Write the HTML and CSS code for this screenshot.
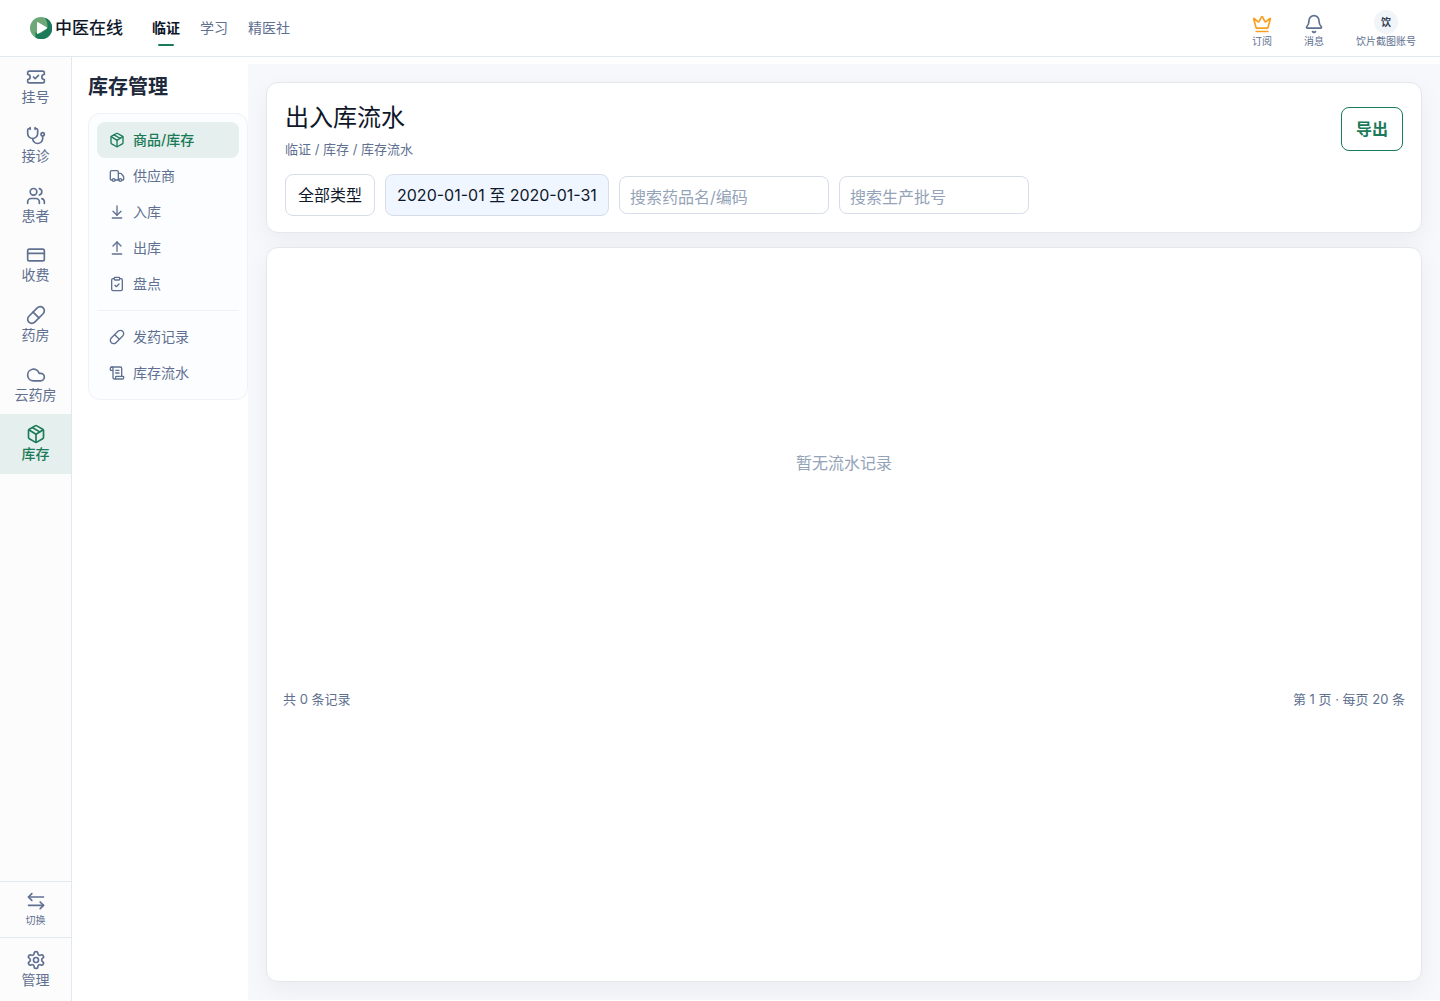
FILE: index.html
```html
<!DOCTYPE html>
<html lang="zh-CN">
<head>
<meta charset="utf-8">
<meta name="viewport" content="width=device-width, initial-scale=1">
<title>出入库流水 - 中医在线</title>
<link rel="stylesheet" href="styles.css">
</head>
<body>
<svg class="sprite" aria-hidden="true">
  <symbol id="i-ticket" viewBox="0 0 24 24"><path d="M2 9a3 3 0 1 1 0 6v2a2 2 0 0 0 2 2h16a2 2 0 0 0 2-2v-2a3 3 0 1 1 0-6V7a2 2 0 0 0-2-2H4a2 2 0 0 0-2 2Z"/><path d="m9 12 2 2 4-4"/></symbol>
  <symbol id="i-steth" viewBox="0 0 24 24"><path d="M11 2v2"/><path d="M5 2v2"/><path d="M5 3H4a2 2 0 0 0-2 2v4a6 6 0 0 0 12 0V5a2 2 0 0 0-2-2h-1"/><path d="M8 15a6 6 0 0 0 12 0v-3"/><circle cx="20" cy="10" r="2"/></symbol>
  <symbol id="i-users" viewBox="0 0 24 24"><path d="M16 21v-2a4 4 0 0 0-4-4H6a4 4 0 0 0-4 4v2"/><circle cx="9" cy="7" r="4"/><path d="M22 21v-2a4 4 0 0 0-3-3.87"/><path d="M16 3.13a4 4 0 0 1 0 7.75"/></symbol>
  <symbol id="i-card" viewBox="0 0 24 24"><rect x="2" y="5" width="20" height="14" rx="2"/><path d="M2 10h20"/></symbol>
  <symbol id="i-pill" viewBox="0 0 24 24"><path d="m10.500 20.500 10-10a4.950 4.950 0 1 0-7-7l-10 10a4.950 4.950 0 1 0 7 7Z"/><path d="m8.500 8.500 7 7"/></symbol>
  <symbol id="i-cloud" viewBox="0 0 24 24"><path d="M17.500 19H9a7 7 0 1 1 6.710-9h1.790a4.500 4.500 0 1 1 0 9Z"/></symbol>
  <symbol id="i-package" viewBox="0 0 24 24"><path d="M11 21.730a2 2 0 0 0 2 0l7-4A2 2 0 0 0 21 16V8a2 2 0 0 0-1-1.730l-7-4a2 2 0 0 0-2 0l-7 4A2 2 0 0 0 3 8v8a2 2 0 0 0 1 1.730z"/><path d="M12 22V12"/><path d="m3.300 7 7.703 4.734a2 2 0 0 0 1.994 0L20.700 7"/><path d="m7.500 4.270 9 5.150"/></symbol>
  <symbol id="i-swap" viewBox="0 0 24 24"><path d="m7 2-4 4 4 4"/><path d="M3 6h18"/><path d="m17 12 4 4-4 4"/><path d="M21 16H3"/></symbol>
  <symbol id="i-gear" viewBox="0 0 24 24"><path d="M12.220 2h-.44a2 2 0 0 0-2 2v.18a2 2 0 0 1-1 1.730l-.43.25a2 2 0 0 1-2 0l-.15-.08a2 2 0 0 0-2.730.73l-.22.38a2 2 0 0 0 .73 2.730l.15.1a2 2 0 0 1 1 1.720v.51a2 2 0 0 1-1 1.740l-.15.09a2 2 0 0 0-.73 2.730l.22.38a2 2 0 0 0 2.730.73l.15-.08a2 2 0 0 1 2 0l.43.25a2 2 0 0 1 1 1.730V20a2 2 0 0 0 2 2h.44a2 2 0 0 0 2-2v-.18a2 2 0 0 1 1-1.730l.43-.25a2 2 0 0 1 2 0l.15.08a2 2 0 0 0 2.730-.73l.22-.39a2 2 0 0 0-.73-2.730l-.15-.08a2 2 0 0 1-1-1.740v-.5a2 2 0 0 1 1-1.740l.15-.09a2 2 0 0 0 .73-2.730l-.22-.38a2 2 0 0 0-2.730-.73l-.15.08a2 2 0 0 1-2 0l-.43-.25a2 2 0 0 1-1-1.730V4a2 2 0 0 0-2-2z"/><circle cx="12" cy="12" r="3"/></symbol>
  <symbol id="i-truck" viewBox="0 0 24 24"><path d="M14 18V6a2 2 0 0 0-2-2H4a2 2 0 0 0-2 2v11a1 1 0 0 0 1 1h2"/><path d="M15 18H9"/><path d="M19 18h2a1 1 0 0 0 1-1v-3.650a1 1 0 0 0-.22-.624l-3.480-4.350A1 1 0 0 0 17.520 8H14"/><circle cx="17" cy="18" r="2"/><circle cx="7" cy="18" r="2"/></symbol>
  <symbol id="i-in" viewBox="0 0 24 24"><path d="M12 17V3"/><path d="m6 11 6 6 6-6"/><path d="M19 21H5"/></symbol>
  <symbol id="i-out" viewBox="0 0 24 24"><path d="m18 9-6-6-6 6"/><path d="M12 3v14"/><path d="M5 21h14"/></symbol>
  <symbol id="i-clipboard" viewBox="0 0 24 24"><rect x="8" y="2" width="8" height="4" rx="1"/><path d="M16 4h2a2 2 0 0 1 2 2v14a2 2 0 0 1-2 2H6a2 2 0 0 1-2-2V6a2 2 0 0 1 2-2h2"/><path d="m9 14 2 2 4-4"/></symbol>
  <symbol id="i-scroll" viewBox="0 0 24 24"><path d="M15 12h-5"/><path d="M15 8h-5"/><path d="M19 17V5a2 2 0 0 0-2-2H4"/><path d="M8 21h12a2 2 0 0 0 2-2v-1a1 1 0 0 0-1-1H11a1 1 0 0 0-1 1v1a2 2 0 1 1-4 0V5a2 2 0 1 0-4 0v2a1 1 0 0 0 1 1h3"/></symbol>
  <symbol id="i-crown" viewBox="0 0 24 24"><path d="M11.562 3.266a.5.5 0 0 1 .876 0L15.390 8.870a1 1 0 0 0 1.516.294L21.183 5.500a.5.5 0 0 1 .798.519l-2.834 10.246a1 1 0 0 1-.956.734H5.810a1 1 0 0 1-.957-.734L2.020 6.020a.5.5 0 0 1 .798-.519l4.276 3.664a1 1 0 0 0 1.516-.294z"/><path d="M5 21h14"/></symbol>
  <symbol id="i-bell" viewBox="0 0 24 24"><path d="M10.268 21a2 2 0 0 0 3.464 0"/><path d="M3.262 15.326A1 1 0 0 0 4 17h16a1 1 0 0 0 .74-1.673C19.410 13.956 18 12.499 18 8A6 6 0 0 0 6 8c0 4.499-1.411 5.956-2.738 7.326"/></symbol>
</svg>

<header class="topbar">
  <a class="brand" href="#">
    <svg class="brand-mark" viewBox="0 0 22 22" aria-hidden="true"><circle cx="11" cy="11" r="11" fill="#6fa878"/><path d="M15 .8A11 11 0 1 1 5.500 20.500V15q3 3 7 0l5-4Q18 5 15 .8Z" fill="#1b7a5a"/><path d="M7 5.800v10.400q0 1.200 1 .6l8.600-5q1-.8 0-1.600L8 5.200q-1-.6-1 .6Z" fill="#fff"/></svg>
    <span>中医在线</span>
  </a>
  <nav class="tabs" aria-label="主导航">
    <a class="tab tab-active" href="#" aria-current="page">临证</a>
    <a class="tab" href="#">学习</a>
    <a class="tab" href="#">精医社</a>
  </nav>
  <div class="tools">
    <a class="tool" href="#"><svg class="icon icon-crown"><use href="#i-crown"/></svg><span>订阅</span></a>
    <a class="tool" href="#"><svg class="icon"><use href="#i-bell"/></svg><span>消息</span></a>
    <button class="tool" type="button"><span class="avatar">饮</span><span>饮片截图账号</span></button>
  </div>
</header>

<div class="shell">
  <aside class="rail">
    <nav class="rail-main" aria-label="临证">
      <a class="rail-item" href="#"><svg class="icon"><use href="#i-ticket"/></svg>挂号</a>
      <a class="rail-item" href="#"><svg class="icon"><use href="#i-steth"/></svg>接诊</a>
      <a class="rail-item" href="#"><svg class="icon"><use href="#i-users"/></svg>患者</a>
      <a class="rail-item" href="#"><svg class="icon"><use href="#i-card"/></svg>收费</a>
      <a class="rail-item" href="#"><svg class="icon"><use href="#i-pill"/></svg>药房</a>
      <a class="rail-item" href="#"><svg class="icon"><use href="#i-cloud"/></svg>云药房</a>
      <a class="rail-item rail-active" href="#" aria-current="page"><svg class="icon"><use href="#i-package"/></svg>库存</a>
    </nav>
    <div class="rail-foot">
      <button class="rail-item rail-switch" type="button"><svg class="icon"><use href="#i-swap"/></svg>切换</button>
      <a class="rail-item rail-manage" href="#"><svg class="icon"><use href="#i-gear"/></svg>管理</a>
    </div>
  </aside>

  <aside class="side">
    <h2 class="side-title">库存管理</h2>
    <nav class="menu" aria-label="库存管理">
      <a class="menu-item menu-active" href="#"><svg class="icon icon-sm"><use href="#i-package"/></svg>商品/库存</a>
      <a class="menu-item" href="#"><svg class="icon icon-sm"><use href="#i-truck"/></svg>供应商</a>
      <a class="menu-item" href="#"><svg class="icon icon-sm"><use href="#i-in"/></svg>入库</a>
      <a class="menu-item" href="#"><svg class="icon icon-sm"><use href="#i-out"/></svg>出库</a>
      <a class="menu-item" href="#"><svg class="icon icon-sm"><use href="#i-clipboard"/></svg>盘点</a>
      <hr class="menu-rule">
      <a class="menu-item" href="#"><svg class="icon icon-sm"><use href="#i-pill"/></svg>发药记录</a>
      <a class="menu-item" href="#"><svg class="icon icon-sm"><use href="#i-scroll"/></svg>库存流水</a>
    </nav>
  </aside>

  <main class="content">
    <section class="card head">
      <div class="head-row">
        <div>
          <h1 class="title">出入库流水</h1>
          <p class="crumb">临证 / 库存 / 库存流水</p>
        </div>
        <button class="export" type="button">导出</button>
      </div>
      <form class="filters">
        <button class="pick" type="button">全部类型</button>
        <button class="pick pick-on" type="button">2020-01-01 至 2020-01-31</button>
        <input class="field field-name" type="text" placeholder="搜索药品名/编码" aria-label="搜索药品名/编码">
        <input class="field field-batch" type="text" placeholder="搜索生产批号" aria-label="搜索生产批号">
      </form>
    </section>
    <section class="card records">
      <p class="empty">暂无流水记录</p>
      <footer class="summary"><span>共 0 条记录</span><span>第 1 页 · 每页 20 条</span></footer>
    </section>
  </main>
</div>
</body>
</html>
```

FILE: styles.css
```css
:root {
  --ink: #0f172a;
  --muted: #607090;
  --faint: #94a3b8;
  --line: #e2e8f0;
  --green: #1b7a57;
  --green-soft: #e5efed;
}

* { box-sizing: border-box; }

body {
  margin: 0;
  min-height: 100vh;
  display: flex;
  flex-direction: column;
  background: #fff;
  color: var(--ink);
  font: 14px/20px Inter, "Noto Sans CJK SC", sans-serif;
}

h1, h2, p { margin: 0; }
a { color: inherit; text-decoration: none; }
button, input { font: inherit; color: inherit; }
button { border: 0; padding: 0; background: none; cursor: pointer; }

.sprite { display: none; }
.icon {
  flex: none;
  width: 20px;
  height: 20px;
  fill: none;
  stroke: currentColor;
  stroke-width: 2;
  stroke-linecap: round;
  stroke-linejoin: round;
}
.icon-sm { width: 16px; height: 16px; }
.icon-crown { color: #faa01e; }

/* top bar */
.topbar {
  height: 57px;
  display: flex;
  align-items: center;
  padding: 0 24px 0 30px;
  border-bottom: 1px solid var(--line);
}
.brand {
  display: flex;
  align-items: center;
  gap: 3px;
  margin-right: 29px;
  font-size: 17px;
  font-weight: 500;
}
.brand-mark { width: 22px; height: 22px; }
.tabs { display: flex; gap: 20px; color: var(--muted); }
.tab { padding: 8px 0; position: relative; }
.tab-active { color: var(--ink); font-weight: 600; }
.tab-active::after {
  content: "";
  position: absolute;
  left: 6px;
  right: 6px;
  bottom: 0;
  height: 2px;
  border-radius: 1px;
  background: var(--green);
}
.tools { display: flex; gap: 32px; margin-left: auto; padding-top: 2px; color: var(--muted); }
.tool {
  display: flex;
  flex-direction: column;
  align-items: center;
  justify-content: flex-end;
  font-size: 10px;
  line-height: 14px;
}
.avatar {
  width: 24px;
  height: 24px;
  border-radius: 50%;
  background: #f1f5f9;
  color: #334155;
  font-weight: 600;
  line-height: 24px;
}

/* page columns */
.shell { flex: 1; display: flex; }
.rail {
  flex: none;
  width: 72px;
  display: flex;
  flex-direction: column;
  justify-content: space-between;
  border-right: 1px solid var(--line);
  background: #fcfcfd;
  color: var(--muted);
}
.rail-main { display: grid; grid-auto-rows: 1fr; height: 417px; }
.rail-item {
  width: 100%;
  display: flex;
  flex-direction: column;
  align-items: center;
  justify-content: center;
}
.rail-active { background: var(--green-soft); color: var(--green); font-weight: 500; }
.rail-switch {
  height: 56px;
  border-top: 1px solid var(--line);
  font-size: 10px;
  line-height: 16px;
}
.rail-manage { height: 64px; border-top: 1px solid var(--line); }

.side { flex: none; width: 176px; padding: 16px 0 16px 16px; }
.side-title { font-size: 20px; line-height: 28px; font-weight: 600; color: #1e293b; }
.menu {
  margin-top: 12px;
  padding: 8px;
  border: 1px solid #eef2f7;
  border-radius: 12px;
  background: #fcfdff;
  color: var(--muted);
}
.menu-item {
  display: flex;
  align-items: center;
  gap: 8px;
  height: 36px;
  padding: 0 12px;
  border-radius: 8px;
}
.menu-active { background: var(--green-soft); color: var(--green); font-weight: 500; }
.menu-rule { margin: 8px 0; border: 0; border-top: 1px solid #eef2f7; }

/* content */
.content {
  flex: 1;
  min-width: 0;
  display: flex;
  flex-direction: column;
  gap: 14px;
  margin: 7px 0 1px;
  padding: 18px;
  overflow: hidden;
  background: #f6f8fc;
}
.card {
  border: 1px solid #e5e7eb;
  border-radius: 12px;
  background: #fff;
  box-shadow: 0 8px 24px rgba(15, 23, 42, .05);
}
.head { padding: 16px 18px; }
.head-row { display: flex; align-items: center; justify-content: space-between; }
.title { font-size: 24px; line-height: 38px; font-weight: 400; }
.crumb { margin-top: 2px; font-size: 13px; color: var(--muted); }
.export {
  width: 62px;
  height: 44px;
  border: 1px solid var(--green);
  border-radius: 8px;
  background: #fff;
  color: var(--green);
  font-size: 16px;
  font-weight: 600;
}
.filters { display: flex; flex-wrap: wrap; align-items: center; gap: 10px; margin-top: 15px; font-size: 16px; }
.pick {
  height: 42px;
  padding: 0 12px;
  border: 1px solid #d6dde8;
  border-radius: 8px;
  background: #fff;
}
.pick-on { padding: 0 11px; background: #eff6ff; }
.field {
  height: 38px;
  padding: 3px 10px 0;
  border: 1px solid #d6dde8;
  border-radius: 8px;
  background: #fff;
}
.field::placeholder { color: var(--faint); }
.field-name { width: 210px; }
.field-batch { width: 190px; }

.records { flex: 1; }
.empty { padding: 205px 16px; text-align: center; font-size: 16px; color: var(--faint); }
.summary {
  display: flex;
  justify-content: space-between;
  padding: 11px 16px;
  font-size: 13px;
  color: var(--muted);
}
```
